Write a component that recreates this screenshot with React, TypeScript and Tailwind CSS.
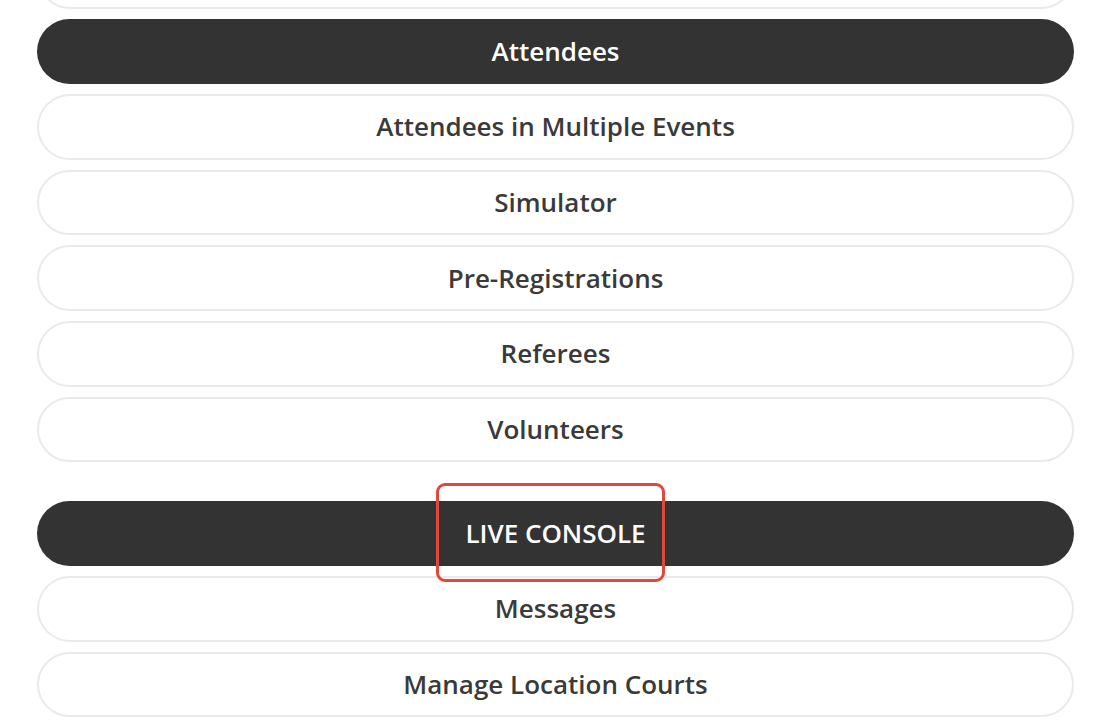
import React from 'react';

type Item = { label: string; active?: boolean; marked?: boolean };

const sections: Item[][] = [
    [
        { label: 'Event Summary' },
        { label: 'Attendees', active: true },
        { label: 'Attendees in Multiple Events' },
        { label: 'Simulator' },
        { label: 'Pre-Registrations' },
        { label: 'Referees' },
        { label: 'Volunteers' },
    ],
    [
        { label: 'LIVE CONSOLE', active: true, marked: true },
        { label: 'Messages' },
        { label: 'Manage Location Courts' },
    ],
];

const NavPill: React.FC<{ item: Item }> = ({ item }) => {
    return (
        <button
            type="button"
            className={
                item.active
                    ? 'relative h-[65.6px] w-full rounded-full bg-[#333333] text-white'
                    : 'relative h-[65.6px] w-full rounded-full border-2 border-[#e8eaec] bg-white text-[#3a3a3a]'
            }
        >
            <span className="text-[26px] font-semibold">{item.label}</span>
            {item.marked && (
                <span className="pointer-events-none absolute left-[399px] top-[-18px] z-10 h-[99px] w-[229px] rounded-[9px] border-[3px] border-[#e0493a]" />
            )}
        </button>
    );
};

const App: React.FC = () => {
    return (
        <div className="h-[728px] overflow-hidden bg-white" style={{ fontFamily: '"Open Sans", "Noto Sans", sans-serif' }}>
            <div className="ml-[37px] mr-[33px] -mt-[57px] flex flex-col gap-[38.4px]">
                {sections.map((section, i) => (
                    <div key={i} className="flex flex-col gap-[10px]">
                        {section.map(item => (
                            <NavPill key={item.label} item={item} />
                        ))}
                    </div>
                ))}
            </div>
        </div>
    );
};

export default App;
